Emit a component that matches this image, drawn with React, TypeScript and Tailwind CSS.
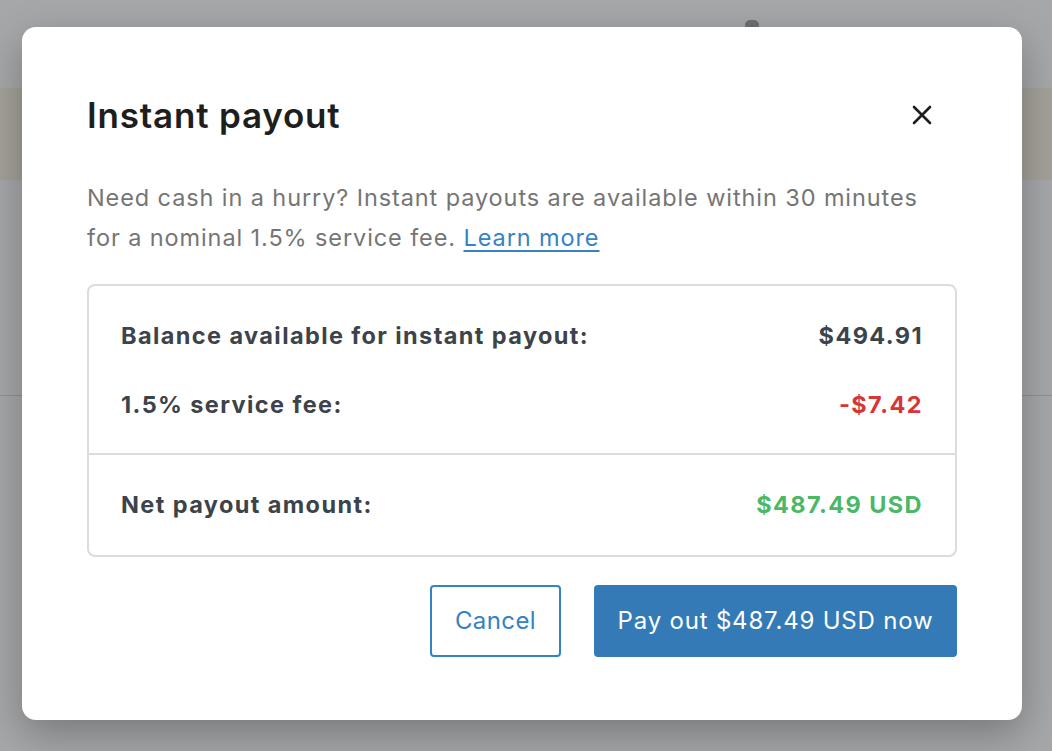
import React from "react";

const font = { fontFamily: "Inter, 'Noto Sans', sans-serif" };

export default function App() {
  return (
    <div className="relative h-[751px] w-full overflow-hidden bg-[#a6a7a9]" style={font}>
      {/* page behind the overlay */}
      <div className="flex flex-col">
        <div className="h-[88px]" />
        <div className="h-[92px] bg-[#a3a198]" />
        <div className="h-[215px]" />
        <div className="h-px bg-[#8f9092]" />
      </div>
      <div className="absolute left-[745px] top-[20px] h-[10px] w-[14px] rounded-full bg-[#6e6f71]" />

      {/* modal */}
      <div className="absolute left-[22px] top-[27px] w-[1000px] rounded-[14px] bg-white px-[65px] pt-[60px] pb-[63px] shadow-[0_14px_40px_rgba(0,0,0,0.28)]">
        <div className="flex h-[56px] items-center justify-between">
          <h2 className="text-[35px] font-semibold tracking-[0.8px] text-[#1e1e1e]">Instant payout</h2>
          <button className="mr-[20px] flex h-[30px] w-[30px] items-center justify-center text-[#1e1e1e]">
            <svg width="22" height="22" viewBox="0 0 22 22" fill="none" stroke="currentColor" strokeWidth="2.6" strokeLinecap="round">
              <path d="M3 3L19 19M19 3L3 19" />
            </svg>
          </button>
        </div>

        <p className="mt-[35px] text-[23.5px] leading-[40px] tracking-[0.9px] text-[#757575]">
          Need cash in a hurry? Instant payouts are available within 30 minutes
          <br />
          for a nominal 1.5% service fee.{" "}
          <a href="#" className="text-[#3582c4] underline underline-offset-[4px]">Learn more</a>
        </p>

        <div className="mt-[26px] rounded-[8px] border-2 border-[#dcdcde]">
          <div className="flex flex-col gap-[29px] px-[32px] pt-[30px] pb-[28px]">
            <div className="flex h-[40px] items-center justify-between text-[23.5px] font-bold tracking-[1.4px] text-[#3c434a]">
              <span>Balance available for instant payout:</span>
              <span>$494.91</span>
            </div>
            <div className="flex h-[40px] items-center justify-between text-[23.5px] font-bold tracking-[1.4px] text-[#3c434a]">
              <span>1.5% service fee:</span>
              <span className="text-[#d63638]">-$7.42</span>
            </div>
          </div>
          <div className="h-[2px] bg-[#dcdcde]" />
          <div className="flex h-[100px] items-center justify-between px-[32px] text-[23.5px] font-bold tracking-[1.4px] text-[#3c434a]">
            <span>Net payout amount:</span>
            <span className="text-[#4ab866]">$487.49 USD</span>
          </div>
        </div>

        <div className="mt-[28px] flex justify-end gap-[33px]">
          <button className="h-[72px] w-[131px] rounded-[4px] border-2 border-[#3582c4] bg-white text-[24px] tracking-[0.4px] text-[#3582c4]">
            Cancel
          </button>
          <button className="h-[72px] w-[363px] rounded-[4px] bg-[#337ab7] text-[24px] tracking-[0.8px] text-white">
            Pay out $487.49 USD now
          </button>
        </div>
      </div>
    </div>
  );
}
